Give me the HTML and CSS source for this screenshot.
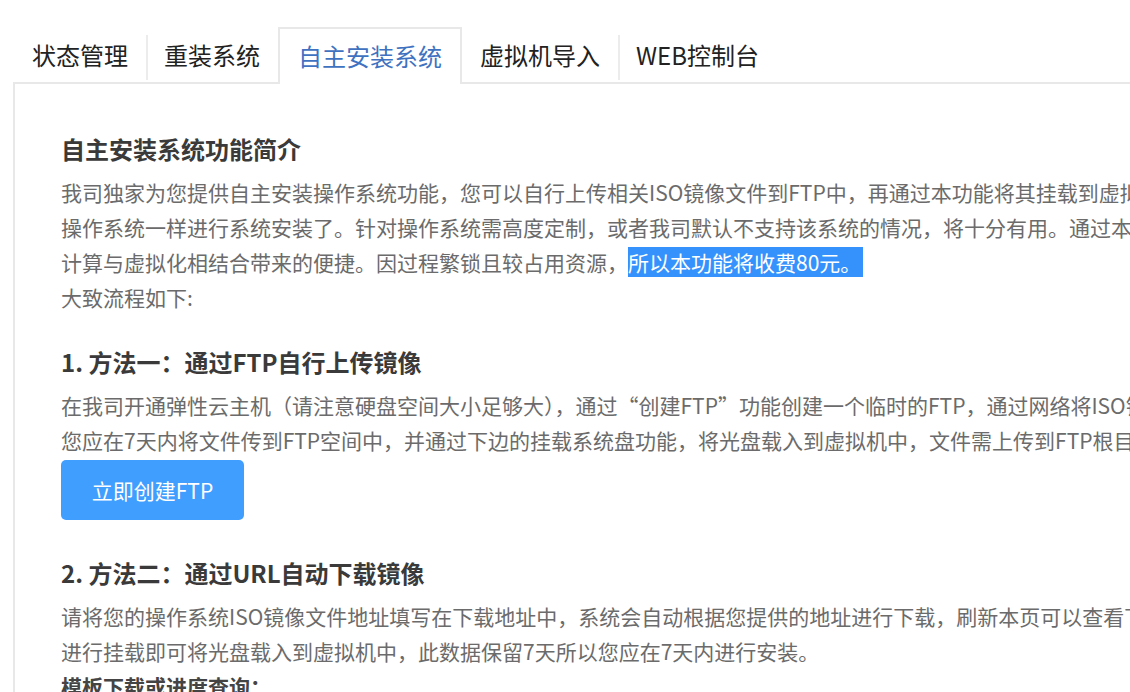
FILE: index.html
```html
<!DOCTYPE html>
<html lang="zh-CN">
<head>
<meta charset="utf-8">
<title>自主安装系统</title>
<link rel="stylesheet" href="styles.css">
</head>
<body>
<div class="tabs">
  <div class="tab">状态管理</div>
  <div class="tab sep">重装系统</div>
  <div class="tab active">自主安装系统</div>
  <div class="tab">虚拟机导入</div>
  <div class="tab sep">WEB控制台</div>
</div>
<div class="panel">
  <section class="block intro">
    <h3 class="title">自主安装系统功能简介</h3>
    <p class="text">我司独家为您提供自主安装操作系统功能，您可以自行上传相关ISO镜像文件到FTP中，再通过本功能将其挂载到虚拟机中，就可以像安装普通电脑<br>操作系统一样进行系统安装了。针对操作系统需高度定制，或者我司默认不支持该系统的情况，将十分有用。通过本功能，您可以充分体验云<br>计算与虚拟化相结合带来的便捷。因过程繁锁且较占用资源，<span class="hl">所以本功能将收费80元。</span><br>大致流程如下:</p>
  </section>
  <section class="block method1">
    <h3 class="title">1. 方法一：通过FTP自行上传镜像</h3>
    <p class="text">在我司开通弹性云主机（请注意硬盘空间大小足够大），通过“创建FTP”功能创建一个临时的FTP，通过网络将ISO镜像文件上传到FTP中，<br>您应在7天内将文件传到FTP空间中，并通过下边的挂载系统盘功能，将光盘载入到虚拟机中，文件需上传到FTP根目录下。</p>
    <button class="btn" type="button">立即创建FTP</button>
  </section>
  <section class="block method2">
    <h3 class="title">2. 方法二：通过URL自动下载镜像</h3>
    <p class="text">请将您的操作系统ISO镜像文件地址填写在下载地址中，系统会自动根据您提供的地址进行下载，刷新本页可以查看下载进度，下载完成后<br>进行挂载即可将光盘载入到虚拟机中，此数据保留7天所以您应在7天内进行安装。</p>
    <p class="sub">模板下载或进度查询：</p>
  </section>
</div>
</body>
</html>
```

FILE: styles.css
```css
html, body {
  margin: 0;
  padding: 0;
  overflow: hidden;
  background: #fff;
}
body {
  width: 1130px;
  height: 692px;
  font-family: "Microsoft YaHei", "Noto Sans CJK SC", sans-serif;
}
.tabs {
  display: flex;
  align-items: flex-start;
  margin: 27px 0 0 14px;
  height: 55px;
  position: relative;
  z-index: 2;
}
.tab {
  position: relative;
  box-sizing: border-box;
  height: 55px;
  line-height: 55px;
  padding: 0 18px;
  font-size: 24px;
  color: #222;
  white-space: nowrap;
}
.tab.sep::before {
  content: "";
  position: absolute;
  left: 0;
  top: 8px;
  bottom: 2px;
  width: 2px;
  background: #ececec;
}
.tab.active {
  height: 57px;
  line-height: 53px;
  border: 2px solid #e8e8e8;
  border-bottom: none;
  background: #fff;
  color: #3f72c0;
}
.panel {
  position: relative;
  z-index: 1;
  margin-left: 13px;
  width: 1300px;
  min-height: 700px;
  box-sizing: border-box;
  border: 2px solid #e8e8e8;
  padding: 47px 0 0 46px;
}
.block {
  margin: 0;
}
.method1 {
  margin-top: 29px;
}
.method2 {
  margin-top: 35px;
}
.title {
  margin: 0 0 9px;
  font-size: 24px;
  line-height: 35px;
  font-weight: bold;
  color: #3a3a3a;
  white-space: nowrap;
}
.text {
  margin: 0;
  font-size: 21px;
  line-height: 35px;
  color: #6b6b6b;
  white-space: nowrap;
}
.hl {
  background: #3592fd;
  color: #fff;
  padding-right: 2px;
}
.btn {
  display: flex;
  align-items: center;
  justify-content: center;
  margin-top: 2px;
  width: 183px;
  height: 60px;
  border: none;
  border-radius: 5px;
  background: #409eff;
  color: #fff;
  font-family: inherit;
  font-size: 21px;
  padding: 0;
}
.sub {
  margin: 0;
  font-size: 21px;
  line-height: 35px;
  font-weight: bold;
  color: #444;
  white-space: nowrap;
}
```
